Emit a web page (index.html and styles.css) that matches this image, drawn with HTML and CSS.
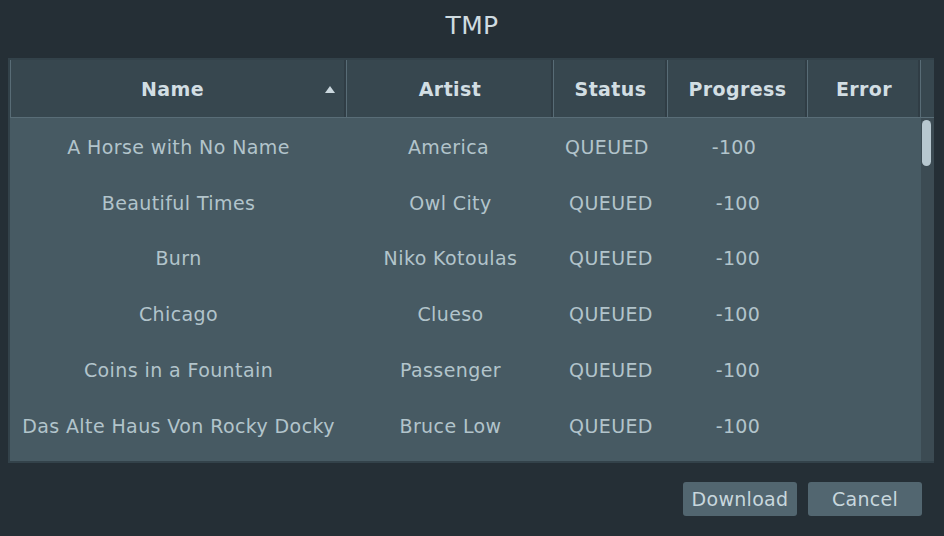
FILE: index.html
```html
<!DOCTYPE html>
<html>
<head>
<meta charset="utf-8">
<link rel="stylesheet" href="styles.css">
</head>
<body>
<div class="dialog">
  <div class="title">TMP</div>
  <div class="frame">
    <div class="grid header">
      <div class="hcell sorted">Name<span class="sort-arrow"></span></div>
      <div class="hcell">Artist</div>
      <div class="hcell">Status</div>
      <div class="hcell">Progress</div>
      <div class="hcell">Error</div>
      <div class="hcell corner"></div>
    </div>
    <div class="body">
      <div class="rows">
        <div class="grid row first"><div class="cell">A Horse with No Name</div><div class="cell">America</div><div class="cell">QUEUED</div><div class="cell">-100</div><div class="cell"></div></div>
        <div class="grid row"><div class="cell">Beautiful Times</div><div class="cell">Owl City</div><div class="cell">QUEUED</div><div class="cell">-100</div><div class="cell"></div></div>
        <div class="grid row"><div class="cell">Burn</div><div class="cell">Niko Kotoulas</div><div class="cell">QUEUED</div><div class="cell">-100</div><div class="cell"></div></div>
        <div class="grid row"><div class="cell">Chicago</div><div class="cell">Clueso</div><div class="cell">QUEUED</div><div class="cell">-100</div><div class="cell"></div></div>
        <div class="grid row"><div class="cell">Coins in a Fountain</div><div class="cell">Passenger</div><div class="cell">QUEUED</div><div class="cell">-100</div><div class="cell"></div></div>
        <div class="grid row"><div class="cell">Das Alte Haus Von Rocky Docky</div><div class="cell">Bruce Low</div><div class="cell">QUEUED</div><div class="cell">-100</div><div class="cell"></div></div>
      </div>
      <div class="scrollbar"><div class="thumb"></div></div>
    </div>
  </div>
  <div class="actions">
    <button class="btn">Download</button>
    <button class="btn">Cancel</button>
  </div>
</div>
</body>
</html>
```

FILE: styles.css
```css
* { box-sizing: border-box; }
html, body {
  margin: 0;
  padding: 0;
  background: #252f36;
  font-family: "DejaVu Sans", "Liberation Sans", sans-serif;
}
.dialog {
  width: 944px;
  height: 536px;
  display: flex;
  flex-direction: column;
}
.title {
  height: 48px;
  padding-top: 11px;
  text-align: center;
  font-size: 25px;
  line-height: 30px;
  color: #cfdbe0;
  letter-spacing: 0.3px;
}
.frame {
  margin: 10px 10px 0 8px;
  height: 405px;
  padding: 2px 0 2px 2px;
  background: #33424a;
  display: flex;
  flex-direction: column;
}
.grid {
  display: grid;
  grid-template-columns: 337px 207px 114px 140px 113px 13px;
}
.header {
  background: #37474f;
  border-bottom: 1px solid #596d77;
  height: 58px;
}
.hcell {
  position: relative;
  display: flex;
  align-items: center;
  justify-content: center;
  font-weight: bold;
  font-size: 19px;
  letter-spacing: 0.4px;
  color: #d2dee3;
  border-right: 1px solid #586c76;
  box-shadow: inset -2px 0 0 #303d45;
}
.hcell.sorted {
  border-left: 1px solid #586c76;
  padding-right: 12px;
}
.hcell.corner {
  border-right: none;
  box-shadow: none;
}
.sort-arrow {
  position: absolute;
  right: 11px;
  top: 26px;
  width: 0;
  height: 0;
  border-left: 5px solid transparent;
  border-right: 5px solid transparent;
  border-bottom: 7px solid #cbd8de;
}
.body {
  flex: 1;
  display: flex;
  overflow: hidden;
  background: #475a63;
}
.rows {
  width: 911px;
  padding-top: 1px;
}
.row {
  grid-template-columns: 337px 207px 114px 140px 113px;
  height: 55.8px;
}
.cell {
  display: flex;
  align-items: center;
  justify-content: center;
  font-size: 19px;
  letter-spacing: 0.4px;
  color: #b2c4cb;
  white-space: nowrap;
}
.row.first .cell:nth-child(3),
.row.first .cell:nth-child(4) {
  padding-right: 8px;
}
.row.first .cell:nth-child(2) {
  padding-right: 4px;
}
.scrollbar {
  width: 13px;
  background: #3c4b53;
  padding: 2px 3px 0 1px;
}
.thumb {
  height: 46px;
  border-radius: 5px;
  background: #b7c7cf;
}
.actions {
  display: flex;
  justify-content: flex-end;
  gap: 11px;
  padding: 19px 22px 0 0;
}
.btn {
  width: 114px;
  height: 34px;
  border: none;
  border-radius: 3px;
  background: #526670;
  color: #c8d7dd;
  font-family: "DejaVu Sans", "Liberation Sans", sans-serif;
  font-size: 19px;
  letter-spacing: 0.3px;
  padding: 0;
}
```
